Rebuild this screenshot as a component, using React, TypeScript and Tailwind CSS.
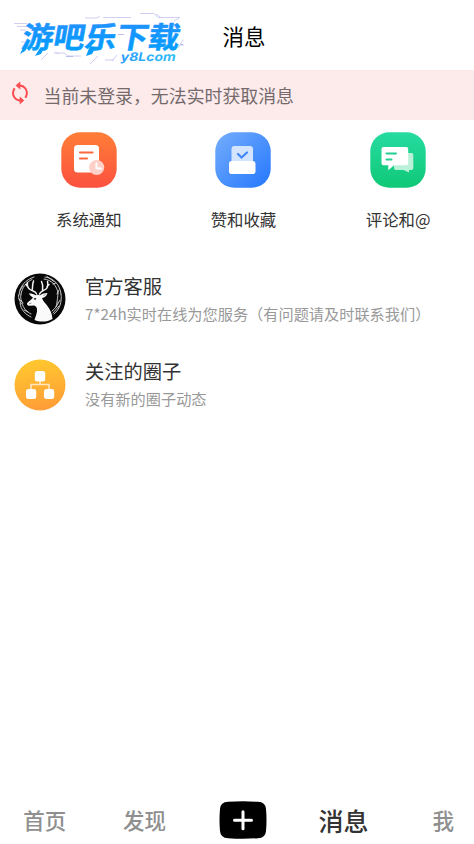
const font = "[font-family:'Noto_Sans_CJK_SC',sans-serif]"

const tabs = [
  { label: '首页', active: false },
  { label: '发现', active: false },
  { label: '', active: false },
  { label: '消息', active: true },
  { label: '我', active: false },
]

function Logo() {
  return (
    <svg className="h-[70px] w-[200px]" viewBox="0 0 200 70" fill="none">
      <defs>
        <linearGradient id="logoFill" x1="0" y1="-27" x2="0" y2="6" gradientUnits="userSpaceOnUse">
          <stop stopColor="#2492ff" />
          <stop offset="0.6" stopColor="#0c98fe" />
          <stop offset="1" stopColor="#05a0fb" />
        </linearGradient>
        <linearGradient id="logoSub" x1="0" y1="0" x2="56" y2="0" gradientUnits="userSpaceOnUse">
          <stop stopColor="#2a9fff" />
          <stop offset="1" stopColor="#30bdf3" />
        </linearGradient>
      </defs>
      <g stroke="#cbc8ef" strokeWidth="0.9">
        <path d="M14 23.500h13M17 26.500h10M20 30h6M85 18h12l3-2M103 17.500h28M140 13.500h14l4 4h22M156 14l4 3M183 40l-5 8M21 42h4M174 21l5-3" />
        <path d="M54 53h10l4 3h13M41 60l7-7M90 64l8-8M105 60h9M117 55l-5 6M180 45h4M55 52l4 2" />
      </g>
      <path d="M118 34.500h6M66 56.500h7M180 44.500h3" stroke="#a9b0ee" strokeWidth="0.8" />
      <text
        className="[font-family:'Noto_Sans_CJK_SC',sans-serif] font-bold"
        transform="translate(20.500 47.500) skewX(-10) scale(1.070 1)"
        fontSize="29.500"
        fill="url(#logoFill)"
        stroke="url(#logoFill)"
        strokeWidth="0.5"
      >
        游吧乐下载
      </text>
      <path d="M24 46l-4 8 5-3 3-6zM40 48l-5 8 6-2 3-6zM90 46l-4 10 6-2 4-7z" fill="#0a9bfc" />
      <text
        className="[font-family:Inter,sans-serif] font-bold"
        transform="translate(120 61) skewX(-12)"
        textLength="55"
        lengthAdjust="spacingAndGlyphs"
        fontSize="12"
        fill="url(#logoSub)"
        stroke="#fff"
        strokeWidth="1.500"
        paintOrder="stroke"
      >
        y8Lcom
      </text>
    </svg>
  )
}

function SyncIcon() {
  return (
    <svg className="h-[26px] w-[20px]" viewBox="0 0 20 26" fill="none">
      <path d="M8.500 5.500C14.500 5 18.300 10.500 16.300 16M11.300 20.500C5.500 21 1.500 15.500 3.700 10" stroke="#fb4d50" strokeWidth="2" />
      <path d="M10.300 1.500v8L5.500 5.500zM9.700 16.500v8l4.500-4z" fill="#fb4d50" />
      <path d="M3.600 10.300l1-2M16.400 15.700l-1 2" stroke="#fb4d50" strokeWidth="2" />
    </svg>
  )
}

function NoticeIcon() {
  return (
    <svg className="size-14" viewBox="0 0 56 56" fill="none">
      <defs>
        <linearGradient id="orange" x1="0" y1="0" x2="0" y2="1">
          <stop stopColor="#ff7e37" />
          <stop offset="1" stopColor="#fb513f" />
        </linearGradient>
      </defs>
      <rect x="0.300" y="0.300" width="55.400" height="55.400" rx="19" fill="url(#orange)" />
      <rect x="13" y="13" width="25" height="27.500" rx="3.500" fill="#fff" />
      <path d="M19 20.500h12.500M19 26.500h7" stroke="#fb6a3e" strokeWidth="2.200" strokeLinecap="round" />
      <circle cx="35.700" cy="35.500" r="7.600" fill="#fed0c7" />
      <path d="M35.500 31.500v5h4.500" stroke="#fff" strokeWidth="2" strokeLinecap="round" />
    </svg>
  )
}

function LikeIcon() {
  return (
    <svg className="size-14" viewBox="0 0 56 56" fill="none">
      <defs>
        <linearGradient id="blue" x1="0" y1="0" x2="1" y2="1">
          <stop stopColor="#75adfc" />
          <stop offset="1" stopColor="#2377fd" />
        </linearGradient>
      </defs>
      <rect x="0.300" y="0.300" width="55.400" height="55.400" rx="19" fill="url(#blue)" />
      <rect x="16.500" y="14" width="21.500" height="22" rx="3" fill="#d3e4fe" />
      <path d="M23 22l3.500 3.500 5.500-5" stroke="#4387fb" strokeWidth="2.300" strokeLinecap="round" />
      <rect x="14" y="29" width="26.500" height="13" rx="2.800" fill="#fff" />
    </svg>
  )
}

function CommentIcon() {
  return (
    <svg className="size-14" viewBox="0 0 56 56" fill="none">
      <defs>
        <linearGradient id="green" x1="0" y1="0" x2="0" y2="1">
          <stop stopColor="#26dba1" />
          <stop offset="1" stopColor="#10c877" />
        </linearGradient>
      </defs>
      <rect x="0.300" y="0.300" width="55.400" height="55.400" rx="19" fill="url(#green)" />
      <path d="M37 21h4.500a1.800 1.800 0 0 1 1.800 1.800v13.400a1.800 1.800 0 0 1-1.800 1.800H39v2.600L33.500 38H26a2 2 0 0 1-2-2V31h13z" fill="#b9f2d9" />
      <path d="M13.500 15h22.700a2 2 0 0 1 2 2v14.200a2 2 0 0 1-2 2H24l-5.700 5v-5h-4.800a2 2 0 0 1-2-2V17a2 2 0 0 1 2-2z" fill="#fff" />
      <path d="M16.500 21.500h9.500M16.500 27.500h5" stroke="#25cf91" strokeWidth="2" strokeLinecap="round" />
    </svg>
  )
}

function DeerAvatar() {
  return (
    <svg className="size-[52px]" viewBox="0 0 52 52" fill="none">
      <circle cx="26" cy="26" r="25.500" fill="#080808" />
      <g stroke="#d8d8d8" strokeWidth="0.9" strokeLinecap="round">
        <path d="M20 4C11 7 6 13 5 22M18 6.500C12 9 8 15 7 21M4.500 22c0 4 1 6 3 9M7 21c-1 4 0 7 2 9M6 30c1 7 5 11 11 14M8 30c1 5 5 9 9 11M10 37l4 2M6 17l3-4M5 26l3 3" />
        <path d="M31 4c9 1 15 8 16 17M30 6c8 1 13 7 14 14M47 21c1 8-1 15-7 20M44 20c0 4-1 7-1 10M46 27l-4 7M43 30c0 3-2 6-5 8M45 33l-6 7M42 10l-3 1M45 17l-2 4M33 3.500l7 5" />
      </g>
      <g stroke="#f3f3f3" strokeWidth="1.500" strokeLinecap="round" strokeLinejoin="round">
        <path d="M22.500 21C22 18 19 18.500 16 16.500c-3-2-3-4-2.500-7M18 17.500c1-3 0-5 1.500-9.500M14 14l-2-2.500" />
        <path d="M25.500 21c1-3 4-3 6.500-5 2.500-2 2-4 1.500-7.500M28.500 17.500c0-3 1-5-1-9M33 13.500l2-2" />
      </g>
      <path d="M15 20.500c3 0 5 .5 6.500 1.800 1.500-.8 3-.8 4.500 0 2-1.800 4.500-2.200 7.500-2.300-.5 2.700-2.500 4.500-5.500 5C30 31 37.500 34 38.500 46c-5 3-12 3.500-18 1 1-4 3-7 2.500-11-.3-2-1-2.500-2.500-3.500l-5.500.2c-1.500-.2-2-1.200-2-2.500 2-2 4-3 6-5.700C17.500 23.300 15.500 22.500 15 20.500z" fill="#fafafa" />
      <path d="M19.800 25.800l2.200-.6-.7 1.500z" fill="#111" stroke="#111" strokeWidth="0.500" />
      <path d="M15 30.800l2.500-.7M29.500 22.500l2-1" stroke="#555" strokeWidth="0.600" />
    </svg>
  )
}

function CircleAvatar() {
  return (
    <svg className="size-[52px]" viewBox="0 0 52 52" fill="none">
      <defs>
        <linearGradient id="amber" x1="0.400" y1="0" x2="0.600" y2="1">
          <stop stopColor="#ffc82e" />
          <stop offset="1" stopColor="#ff9c38" />
        </linearGradient>
      </defs>
      <circle cx="26" cy="26" r="25.500" fill="url(#amber)" />
      <path d="M26 22v4M17 30v-4.500h18V30" stroke="#ffe6bb" strokeWidth="1.600" />
      <rect x="20.800" y="12" width="10.400" height="10.400" rx="2.500" fill="#fff" />
      <rect x="12" y="30" width="10.200" height="10" rx="2.500" fill="#fff" />
      <rect x="30" y="30" width="10.200" height="10" rx="2.500" fill="#fff" />
    </svg>
  )
}

const shortcuts = [
  { label: '系统通知', icon: <NoticeIcon /> },
  { label: '赞和收藏', icon: <LikeIcon /> },
  { label: '评论和@', icon: <CommentIcon /> },
]

const chats = [
  { title: '官方客服', text: '7*24h实时在线为您服务（有问题请及时联系我们）', avatar: <DeerAvatar /> },
  { title: '关注的圈子', text: '没有新的圈子动态', avatar: <CircleAvatar /> },
]

export default function App() {
  return (
    <div className={`h-screen w-full overflow-hidden bg-white ${font}`}>
      <div className="flex h-full w-[488px] flex-col">
        <header className="relative flex h-[70px] shrink-0 items-center justify-center pt-0.5">
          <div className="absolute top-0 left-0">
            <Logo />
          </div>
          <h1 className="text-[21.5px] leading-8 text-black">消息</h1>
        </header>

        <div className="flex h-[50px] shrink-0 items-center bg-[#fdeaeb] pl-2.5">
          <div className="-mt-1">
            <SyncIcon />
          </div>
          <p className="ml-[13.5px] text-[17.9px] leading-7 text-[#746a6b]">当前未登录，无法实时获取消息</p>
        </div>

        <section className="grid grid-cols-3 pt-3 pr-[12.5px] pl-[11.5px]">
          {shortcuts.map(s => (
            <button key={s.label} className="flex flex-col items-center">
              {s.icon}
              <span className="mt-[19px] text-[16.4px] leading-6 text-[#333]">{s.label}</span>
            </button>
          ))}
        </section>

        <ul className="flex flex-col gap-[33.500px] pt-[42px] pl-3.5">
          {chats.map(c => (
            <li key={c.title} className="flex h-[52px] items-center">
              {c.avatar}
              <div className="ml-[19px]">
                <h2 className="text-[19.3px] leading-7 text-[#333]">{c.title}</h2>
                <p className="text-[15.2px] leading-[27px] text-[#999]">{c.text}</p>
              </div>
            </li>
          ))}
        </ul>

        <nav className="mt-auto -mx-[5px] grid h-[48px] grid-cols-5 items-center justify-items-center font-medium">
          {tabs.map((t, i) =>
            t.label ? (
              <span key={i} className={t.active ? 'text-[25px] leading-9 text-[#333]' : 'text-[21.5px] leading-8 text-[#8f8f8f]'}>
                {t.label}
              </span>
            ) : (
              <button key={i} aria-label="发布" className="mr-px">
                <svg className="h-[38px] w-12" viewBox="0 0 48 38" fill="none">
                  <path d="M9 .8Q24-.4 39 .8Q46.500 1 47 8Q48 19 47 30Q46.500 37 39 37.200Q24 38.400 9 37.200Q1.500 37 1 30Q0 19 1 8Q1.500 1 9 .8z" fill="#000" />
                  <path d="M24 10.800v17M15.500 19.300h17" stroke="#fff" strokeWidth="3" strokeLinecap="round" />
                </svg>
              </button>
            )
          )}
        </nav>
      </div>
    </div>
  )
}
